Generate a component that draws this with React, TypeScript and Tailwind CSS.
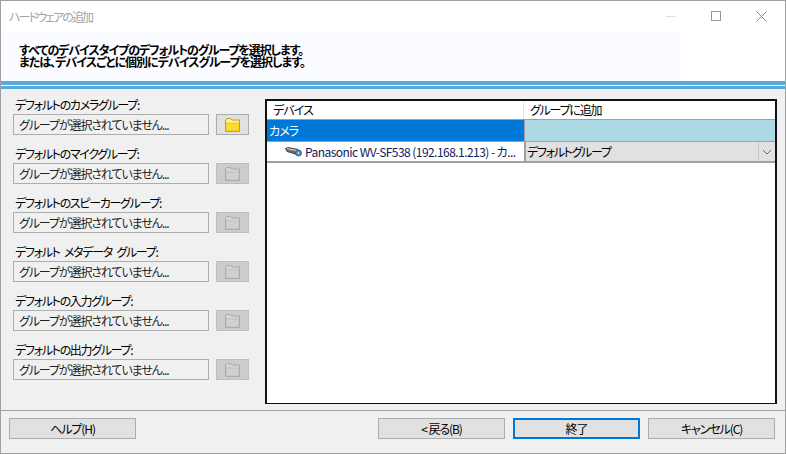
const groups = [
  "デフォルトのカメラグループ:",
  "デフォルトのマイクグループ:",
  "デフォルトのスピーカーグループ:",
  "デフォルト メタデータ グループ:",
  "デフォルトの入力グループ:",
  "デフォルトの出力グループ:",
];

const FolderIcon = ({ active }: { active: boolean }) => (
  <svg width="15" height="14" viewBox="0 0 15 14">
    <path
      d="M0.5 2 L2 0.5 H5.5 L7 2 H14.5 V13.5 H0.5 Z"
      fill={active ? "#fff0a0" : "#d4d4d4"}
      stroke={active ? "#c49a00" : "#a8a8a8"}
    />
    <path
      d="M1 5 H14 V13 H1 Z"
      fill={active ? "#fbdc2e" : "#d0d0d0"}
      stroke={active ? "#ecc000" : "#b4b4b4"}
      strokeWidth="0.6"
    />
  </svg>
);

const CameraIcon = () => (
  <svg width="17" height="10" viewBox="0 0 17 10" className="shrink-0">
    <path d="M0.5 1.5 L3 0.5 L13 2.5 L15 5 L12 7.5 L2 4.5 Z" fill="#6e6e6e" stroke="#2c2c2c" strokeWidth="0.8" />
    <path d="M2 1.6 L12 3.6" stroke="#e0e0e0" strokeWidth="1" />
    <circle cx="13.5" cy="6" r="3" fill="#3f8fd0" stroke="#35506a" strokeWidth="0.8" />
    <circle cx="13.5" cy="6" r="1" fill="#bfe2f7" />
    <rect x="8" y="4" width="1" height="1" fill="#d02020" />
  </svg>
);

const Button = ({ label, primary }: { label: string; primary?: boolean }) => (
  <button
    className={
      primary
        ? "w-[127px] h-[21px] bg-[#e1e1e1] border-2 border-[#0078d7] flex items-center justify-center tracking-[-1.1px]"
        : "w-[127px] h-[21px] bg-[#e1e1e1] border border-[#adadad] flex items-center justify-center tracking-[-1.1px]"
    }
  >
    {label}
  </button>
);

export default function App() {
  return (
    <div className="w-[786px] h-[454px] flex flex-col overflow-hidden bg-[#f0f0f0] border border-[#a0a0a0] text-[12px] leading-[14px] text-black [font-family:'Noto_Sans_CJK_JP','Noto_Sans',sans-serif] [font-feature-settings:'palt'] tracking-[-0.7px]">
      {/* title bar */}
      <div className="h-[30px] shrink-0 bg-white flex items-center pl-2 text-[#a3a3a3]">
        <span className="mt-[1px] tracking-[-1.9px]">ハードウェアの追加</span>
        <div className="ml-auto flex items-center gap-[35px] pr-[18px]">
          <div className="w-[10px] h-px bg-[#e0e0e0]" />
          <div className="w-[10px] h-[10px] border border-[#999]" />
          <svg width="11" height="11" viewBox="0 0 11 11">
            <path d="M0.5 0.5 L10.5 10.5 M10.5 0.5 L0.5 10.5" stroke="#8c8c8c" strokeWidth="1" />
          </svg>
        </div>
      </div>

      {/* header */}
      <div className="h-[50px] shrink-0 bg-white flex">
        <div className="w-[680px] bg-[#fbfcff] pl-[18px] pt-[13px] font-bold leading-[12px]">
          <p className="tracking-[-1.1px]">すべてのデバイスタイプのデフォルトのグループを選択します。</p>
          <p className="tracking-[-1px]">または、デバイスごとに個別にデバイスグループを選択します。</p>
        </div>
      </div>
      <div className="h-[4px] shrink-0 bg-[#5aa9dd]" />
      <div className="h-px shrink-0 bg-white" />
      <div className="h-[3px] shrink-0 bg-[#5aa9dd]" />

      {/* body */}
      <div className="flex-1 flex pt-[9px] pl-[12px] pr-[8px]">
        <div className="w-[252px] shrink-0 flex flex-col gap-[12px]">
          {groups.map((label, i) => (
            <div key={label}>
              <div className="h-[14px] pl-[2px] mb-[2px] tracking-[-1.3px] [word-spacing:3px]">{label}</div>
              <div className="flex gap-[7px]">
                <div className="w-[196px] h-[21px] bg-[#f0f0f0] border border-[#adadad] flex items-center pl-[5px] text-[#222] tracking-[-1.1px]">
                  グループが選択されていません...
                </div>
                <div
                  className={
                    i === 0
                      ? "w-[33px] h-[21px] bg-[#e1e1e1] border border-[#adadad] flex items-center justify-center"
                      : "w-[33px] h-[21px] bg-[#cccccc] border border-[#bfbfbf] flex items-center justify-center"
                  }
                >
                  <FolderIcon active={i === 0} />
                </div>
              </div>
            </div>
          ))}
        </div>

        {/* device table */}
        <div className="w-[513px] h-[305px] mt-[1px] bg-white border-2 border-[#111] border-b-[1.5px]">
          <div className="grid grid-cols-[257px_1fr] h-[19px] border-b border-[#a0a0a0]">
            <div className="pl-[6px] border-r border-[#e4e4e4] flex items-center tracking-[-0.9px]">デバイス</div>
            <div className="pl-[6px] flex items-center tracking-[-1.2px]">グループに追加</div>
          </div>
          <div className="grid grid-cols-[257px_1fr] h-[22px] border-b border-[#a0a0a0]">
            <div className="bg-[#0078d7] text-white flex items-center pl-[2px] tracking-[-1px]">カメラ</div>
            <div className="bg-[#add8e6] border-l border-[#a0a0a0]" />
          </div>
          <div className="grid grid-cols-[257px_1fr] h-[21px] border-b-2 border-[#a0a0a0]">
            <div className="flex items-center pl-[18px] gap-[3px] text-[#10205a] tracking-[-0.55px] whitespace-nowrap overflow-hidden">
              <CameraIcon />
              <span>Panasonic WV-SF538 (192.168.1.213) - カ...</span>
            </div>
            <div className="bg-[#e1e1e1] border-l-2 border-[#a0a0a0] flex items-center pl-[1px] relative tracking-[-1.3px]">
              デフォルトグループ
              <div className="absolute right-0 top-0 bottom-0 w-[17px] border-l border-[#c8c8c8] flex items-center justify-center">
                <svg width="10" height="6" viewBox="0 0 10 6">
                  <path d="M1 1 L5 5 L9 1" fill="none" stroke="#666" strokeWidth="1" />
                </svg>
              </div>
            </div>
          </div>
        </div>
      </div>

      {/* footer */}
      <div className="h-[43px] shrink-0 border-t border-[#a0a0a0] flex pt-[7px] pl-[8px] pr-[10px] gap-[8px]">
        <Button label="ヘルプ(H)" />
        <div className="ml-auto flex gap-[8px]">
          <Button label="< 戻る(B)" />
          <Button label="終了" primary />
          <Button label="キャンセル(C)" />
        </div>
      </div>
    </div>
  );
}
